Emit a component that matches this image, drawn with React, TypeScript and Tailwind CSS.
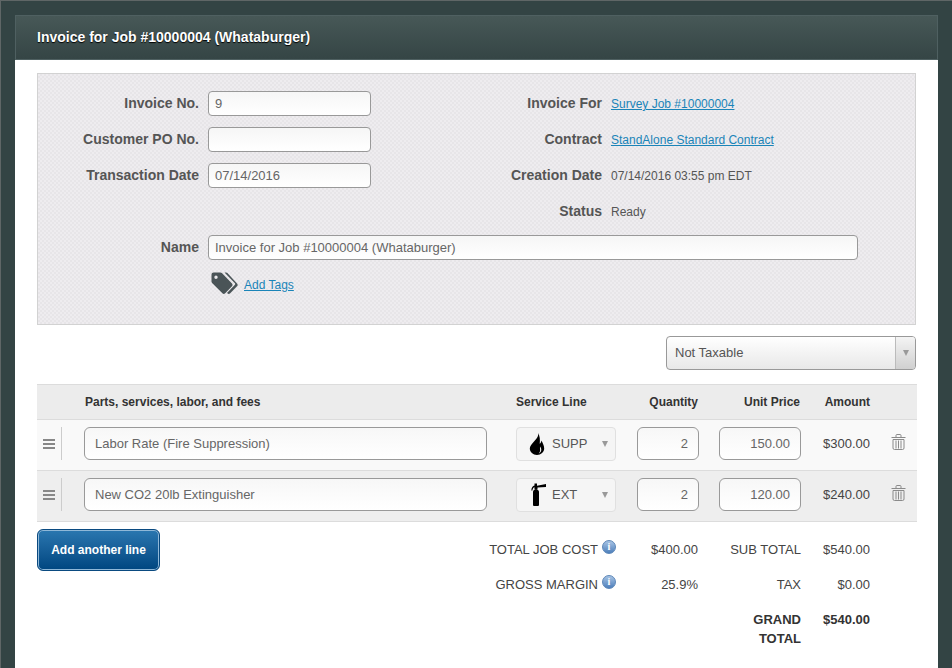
import React from "react";

const rowGrid =
  "grid grid-cols-[47px_403px_29px_100px_21px_62px_20px_82px_69px_1fr] items-center";

function TagsIcon() {
  return (
    <svg width="27" height="23" viewBox="0 0 27 23">
      <path
        d="M2.5 0.5h7a2 2 0 0 1 1.4.6L21 11.5a2 2 0 0 1 0 2.8l-6.8 7a2 2 0 0 1-2.8 0L1.100 11a2 2 0 0 1-.6-1.400V2.500a2 2 0 0 1 2-2zM5 3.500a1.700 1.700 0 1 0 0 3.400 1.700 1.700 0 0 0 0-3.400z"
        fill="#4a5457"
        fillRule="evenodd"
      />
      <path
        d="M13.500 0.500h1.500a2 2 0 0 1 1.400.6L26 11.500a2 2 0 0 1 0 2.800l-6.800 7a2 2 0 0 1-2.800 0l-.4-.4 7.700-7.800a1.500 1.500 0 0 0 0-2.100z"
        fill="#4a5457"
      />
    </svg>
  );
}

function FlameIcon() {
  return (
    <svg width="16" height="22" viewBox="0 0 16 22">
      <path
        d="M9 0c.8 3.500-1.500 5.500-4 8.500C3 11 .8 13 .8 15.500.8 19 4 22 8 22s7.200-3 7.200-6.500c0-3.500-1.700-5.500-2.700-8-.3 1.500-.8 2.500-1.800 3.300C11.200 7 11 3 9 0zM11 13.500c1 1.300 1.500 2.700 1.200 4-.3 1.400-1.200 2.400-2.400 3 1-1.200 1.400-2.400 1.300-3.700-.1-1.100-.2-2.200-.1-3.300z"
        fill="#000"
        fillRule="evenodd"
      />
    </svg>
  );
}

function ExtinguisherIcon() {
  return (
    <svg className="ml-[2px]" width="16" height="23" viewBox="0 0 16 23">
      <path
        d="M2 9c0-1.500 1-2.500 3-2.500S8 7.500 8 9v13a1 1 0 0 1-1 1H3a1 1 0 0 1-1-1zM3.500 .5h2.500v2.200L15 1v3L6.500 4.500V6.500h-3V4.200C2.500 4.500 1.600 5.500 1.400 7.500H.3C.5 4.500 1.800 2.800 3.500 2.500z"
        fill="#000"
      />
    </svg>
  );
}

function TrashIcon() {
  return (
    <svg width="15" height="16" viewBox="0 0 15 16" fill="none" stroke="#8a8a8a" strokeWidth="1">
      <path d="M0.500 3.500h14M5 3.500V1.500a1 1 0 0 1 1-1h3a1 1 0 0 1 1 1v2" />
      <path d="M2 5.500h11v8.500a1.500 1.500 0 0 1-1.500 1.500h-8A1.500 1.500 0 0 1 2 14z" />
      <path d="M5 6.500v8M7.500 6.500v8M10 6.500v8" />
    </svg>
  );
}

function InfoIcon() {
  return (
    <span className="flex size-[14px] items-center justify-center rounded-full border border-[#5b86b8] bg-gradient-to-b from-[#a8c4e4] to-[#4d7fbb] font-['Liberation_Serif',serif] text-[10px] font-bold leading-none text-white">
      i
    </span>
  );
}

function Caret() {
  return <span className="h-0 w-0 border-x-[3.500px] border-t-[6px] border-x-transparent border-t-[#999]" />;
}

function Field({ value, width }: { value: string; width: string }) {
  return (
    <div
      className={`flex h-[25px] items-center rounded-[4px] border border-[#999] bg-gradient-to-b from-[#f6f6f6] to-white px-[6px] text-[13px] text-[#666] ${width}`}
    >
      {value}
    </div>
  );
}

function Label({ children }: { children: string }) {
  return <div className="text-right text-[14px] font-bold text-[#555]">{children}</div>;
}

function ValueLink({ children }: { children: string }) {
  return <a className="pt-px text-[12px] text-[#1a84b8] underline">{children}</a>;
}

function LineRow({
  name,
  icon,
  code,
  qty,
  price,
  amount,
  rowClass,
}: {
  name: string;
  icon: React.ReactNode;
  code: string;
  qty: string;
  price: string;
  amount: string;
  rowClass: string;
}) {
  return (
    <div className={`${rowGrid} h-[51px] border-b border-[#dcdcdc] pb-[3px] ${rowClass}`}>
      <div className="flex h-[33px] items-center">
        <div className="ml-[6px] flex w-[12px] flex-col gap-[2px]">
          <span className="h-[2px] bg-[#888]" />
          <span className="h-[2px] bg-[#888]" />
          <span className="h-[2px] bg-[#888]" />
        </div>
        <span className="ml-[6px] h-[33px] w-px bg-[#ccc]" />
      </div>
      <div className="flex h-[33px] items-center rounded-[6px] border border-[#999] bg-gradient-to-b from-[#f7f7f7] to-white px-[10px] text-[13px] text-[#666]">
        {name}
      </div>
      <div />
      <div className="flex h-[34px] items-center rounded-[4px] border border-[#e0e0e0] bg-[#f5f5f5] text-[13px] text-[#555]">
        <span className="ml-[12px] flex w-[23px]">{icon}</span>
        <span className="w-[50px]">{code}</span>
        <Caret />
      </div>
      <div />
      <div className="flex h-[33px] items-center justify-end rounded-[6px] border border-[#999] bg-gradient-to-b from-[#f7f7f7] to-white pr-[10px] text-[13px] text-[#666]">
        {qty}
      </div>
      <div />
      <div className="flex h-[33px] items-center justify-end rounded-[6px] border border-[#999] bg-gradient-to-b from-[#f7f7f7] to-white pr-[10px] text-[13px] text-[#666]">
        {price}
      </div>
      <div className="text-right text-[13px] text-[#444]">{amount}</div>
      <div className="mb-[4px] ml-[21px]">
        <TrashIcon />
      </div>
    </div>
  );
}

export default function App() {
  return (
    <div className="h-[668px] overflow-hidden border-l border-t border-[#5f6666] bg-[#334444] pl-[14px] pt-[14px] font-['Liberation_Sans',Arial,sans-serif]">
      <div className="w-[923px] bg-white">
        <div className="flex h-[45px] items-center border border-[#4f6061] bg-gradient-to-b from-[#475857] to-[#354545] pl-[21px] text-[14px] font-bold text-white [text-shadow:0_1px_1px_#000]">
          Invoice for Job #10000004 (Whataburger)
        </div>
        <div className="px-[22px] pt-[13px]">
          <div className="h-[252px] w-[879px] border border-[#d2d2d2] bg-[#ebe9ec] bg-[repeating-conic-gradient(#e7e5e8_0_25%,#eeecef_0_50%)] bg-[length:4px_4px] pt-[17px]">
            <div className="grid grid-cols-[161px_163px_222px_1fr] items-center gap-x-[9px] gap-y-[11px]">
              <Label>Invoice No.</Label>
              <Field value="9" width="w-[163px]" />
              <Label>Invoice For</Label>
              <ValueLink>Survey Job #10000004</ValueLink>

              <Label>Customer PO No.</Label>
              <Field value="" width="w-[163px]" />
              <Label>Contract</Label>
              <ValueLink>StandAlone Standard Contract</ValueLink>

              <Label>Transaction Date</Label>
              <Field value="07/14/2016" width="w-[163px]" />
              <Label>Creation Date</Label>
              <div className="pt-px text-[12px] text-[#555]">07/14/2016 03:55 pm EDT</div>

              <div className="h-[25px]" />
              <div />
              <Label>Status</Label>
              <div className="pt-px text-[12px] text-[#555]">Ready</div>

              <Label>Name</Label>
              <div className="col-span-3">
                <Field value="Invoice for Job #10000004 (Whataburger)" width="w-[650px]" />
              </div>
            </div>
            <div className="mt-[12px] flex items-center pl-[173px]">
              <TagsIcon />
              <a className="ml-[6px] pt-[2px] text-[12px] text-[#1a84b8] underline">Add Tags</a>
            </div>
          </div>

          <div className="mt-[11px] flex justify-end">
            <div className="flex h-[34px] w-[250px] items-stretch overflow-hidden rounded-[4px] border border-[#999] bg-gradient-to-b from-white to-[#e8e8e8] text-[13px] text-[#555]">
              <div className="flex flex-1 items-center pl-[8px]">Not Taxable</div>
              <div className="flex w-[20px] items-center justify-center border-l border-[#bbb] bg-gradient-to-b from-[#f4f4f4] to-[#d0d0d0]">
                <Caret />
              </div>
            </div>
          </div>

          <div className="mt-[14px] w-[880px] border-t border-[#dcdcdc]">
            <div className={`${rowGrid} h-[35px] border-b border-[#dcdcdc] bg-[#ececec] text-[12px] font-bold text-[#333]`}>
              <div />
              <div className="pl-px">Parts, services, labor, and fees</div>
              <div />
              <div>Service Line</div>
              <div />
              <div className="text-right">
                <span className="mr-px">Quantity</span>
              </div>
              <div />
              <div className="text-right">
                <span className="mr-px">Unit Price</span>
              </div>
              <div className="text-right">Amount</div>
              <div />
            </div>
            <LineRow
              name="Labor Rate (Fire Suppression)"
              icon={<FlameIcon />}
              code="SUPP"
              qty="2"
              price="150.00"
              amount="$300.00"
              rowClass="bg-[#f9f9f9]"
            />
            <LineRow
              name="New CO2 20lb Extinguisher"
              icon={<ExtinguisherIcon />}
              code="EXT"
              qty="2"
              price="120.00"
              amount="$240.00"
              rowClass="bg-[#eeeeee]"
            />
          </div>

          <div className="flex h-[160px] items-start">
            <button className="mt-[7px] h-[42px] w-[123px] rounded-[6px] border border-[#0a4a80] bg-gradient-to-b from-[#2a77b0] to-[#004680] text-[12px] font-bold text-white shadow-[inset_0_0_0_1px_#8fb8d8]">
              Add another line
            </button>
            <div className="ml-[310px] mt-[14px] grid auto-rows-[35px] grid-cols-[128px_18px_82px_103px_69px] items-start pt-[2px] text-[13px] text-[#444]">
              <div className="pt-[2px] text-right">TOTAL JOB COST</div>
              <div className="pl-[4px] pt-[2px]"><InfoIcon /></div>
              <div className="pt-[2px] text-right">$400.00</div>
              <div className="pt-[2px] text-right">SUB TOTAL</div>
              <div className="pt-[2px] text-right">$540.00</div>

              <div className="pt-[2px] text-right">GROSS MARGIN</div>
              <div className="pl-[4px] pt-[2px]"><InfoIcon /></div>
              <div className="pt-[2px] text-right">25.9%</div>
              <div className="pt-[2px] text-right">TAX</div>
              <div className="pt-[2px] text-right">$0.00</div>

              <div className="col-span-3" />
              <div className="ml-auto w-[60px] pt-[2px] text-right font-bold leading-[19px] text-[#333]">GRAND TOTAL</div>
              <div className="pt-[2px] text-right font-bold text-[#333]">$540.00</div>
            </div>
          </div>
        </div>
      </div>
    </div>
  );
}
